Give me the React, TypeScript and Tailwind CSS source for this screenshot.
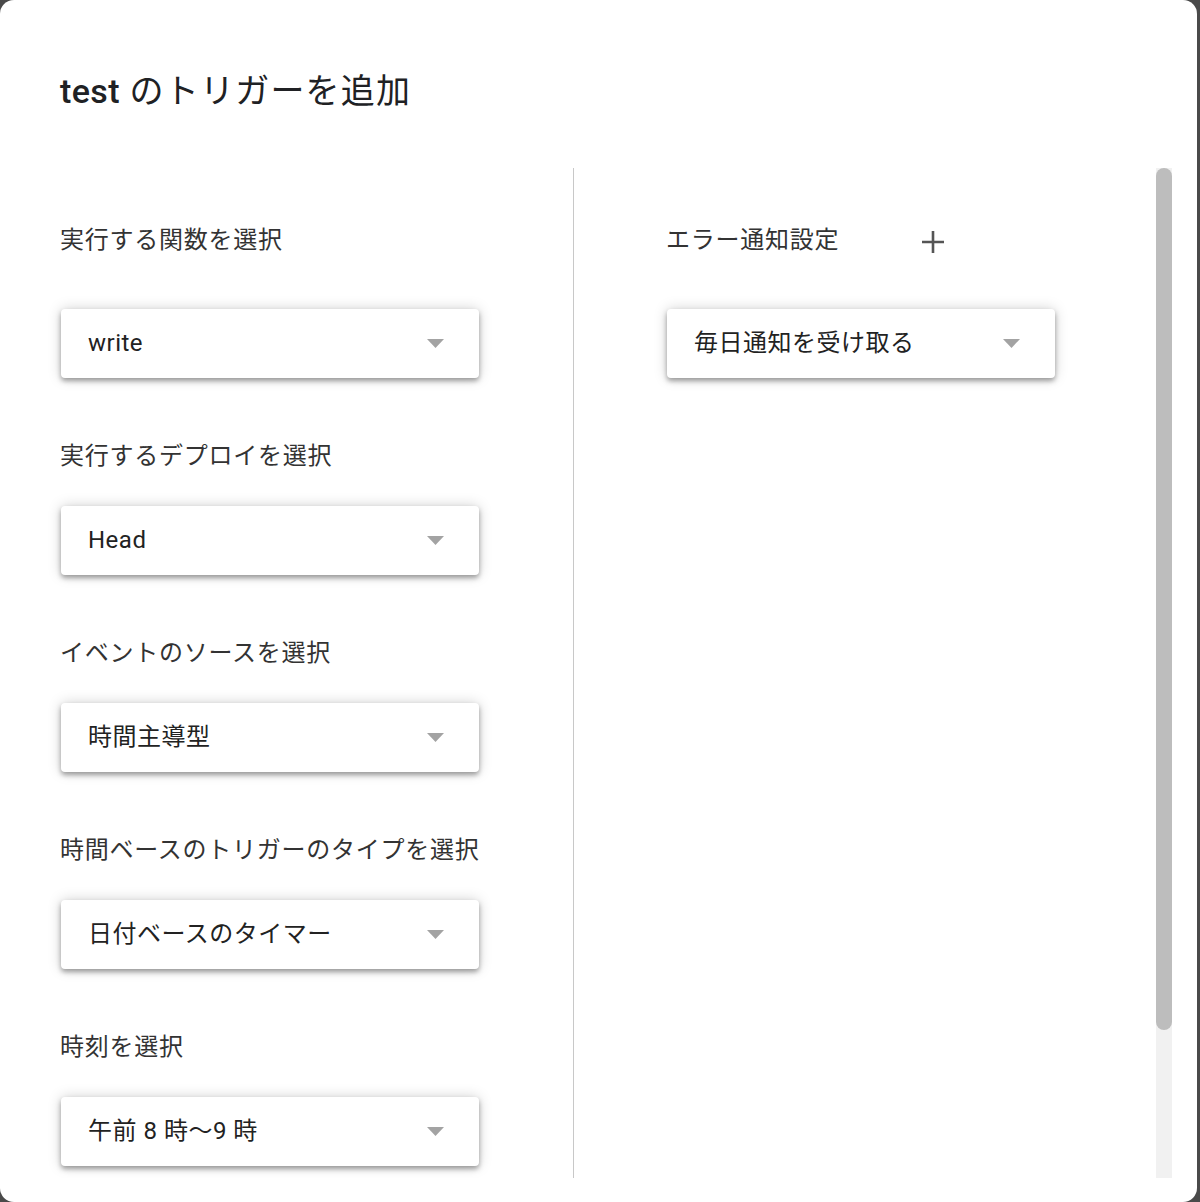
import React from 'react';

const FONT = { fontFamily: 'Roboto, "Noto Sans CJK JP", sans-serif' };

interface SelectBoxProps {
  value: string;
  wide?: boolean;
}

const SelectBox: React.FC<SelectBoxProps> = ({ value, wide = true }) => (
  <div
    className={`${wide ? 'w-[418px]' : 'w-[388px]'} h-[69px] ml-px flex items-center justify-between pl-[27px] pr-[35px] bg-white rounded-[4px] shadow-[0_3px_5px_rgba(0,0,0,0.34),0_0_14px_rgba(0,0,0,0.18)]`}
  >
    <span className="text-[24px] tracking-[0.5px] text-[#222] leading-none -mt-px">{value}</span>
    <svg width="17" height="9" viewBox="0 0 17 9" className="shrink-0">
      <path d="M0 0 L17 0 L8.5 9 Z" fill="#a3a3a3" />
    </svg>
  </div>
);

const FIELDS = [
  { label: '実行するデプロイを選択', value: 'Head' },
  { label: 'イベントのソースを選択', value: '時間主導型' },
  { label: '時間ベースのトリガーのタイプを選択', value: '日付ベースのタイマー' },
  { label: '時刻を選択', value: '午前 8 時〜9 時' },
];

const labelCls = 'text-[24px] leading-[32px] tracking-[0.75px] text-[#333] whitespace-nowrap';

export default function App() {
  return (
    <div className="w-[1200px] h-[1202px] bg-[#4a4a4a] overflow-hidden" style={FONT}>
      <div className="h-full mr-[3px] bg-white rounded-[14px] flex flex-col">
        {/* header */}
        <div className="pt-[70px] pl-[60px] h-[168px] shrink-0">
          <h1 className="text-[34px] leading-[42px] tracking-[1.2px] text-[#202124]">
            <span className="font-medium tracking-[0.4px]">test</span> のトリガーを追加
          </h1>
        </div>

        {/* body */}
        <div className="flex h-[1010px]">
          {/* left column */}
          <div className="w-[574px] border-r border-[#c8c8c8] pl-[60px] pt-[56px] overflow-hidden">
            <div className={labelCls}>実行する関数を選択</div>
            <div className="mt-[53px]">
              <SelectBox value="write" />
            </div>
            {FIELDS.map((f) => (
              <div key={f.label} className="mt-[62px]">
                <div className={labelCls}>{f.label}</div>
                <div className="mt-[34px]">
                  <SelectBox value={f.value} />
                </div>
              </div>
            ))}
          </div>

          {/* right column */}
          <div className="flex-1 flex">
            <div className="flex-1 pl-[92px] pt-[56px]">
              <div className="flex items-center">
                <span className={labelCls}>エラー通知設定</span>
                <svg width="24" height="24" viewBox="0 0 24 24" className="ml-[82px] mt-[4px]">
                  <path d="M12 1 V23 M1 12 H23" stroke="#555" strokeWidth="2.6" />
                </svg>
              </div>
              <div className="mt-[53px]">
                <SelectBox value="毎日通知を受け取る" wide={false} />
              </div>
            </div>
            {/* scrollbar */}
            <div className="w-[16px] mr-[25px] bg-[#f1f1f1] flex flex-col">
              <div className="h-[862px] bg-[#bdbdbd] rounded-full" />
            </div>
          </div>
        </div>
      </div>
    </div>
  );
}
